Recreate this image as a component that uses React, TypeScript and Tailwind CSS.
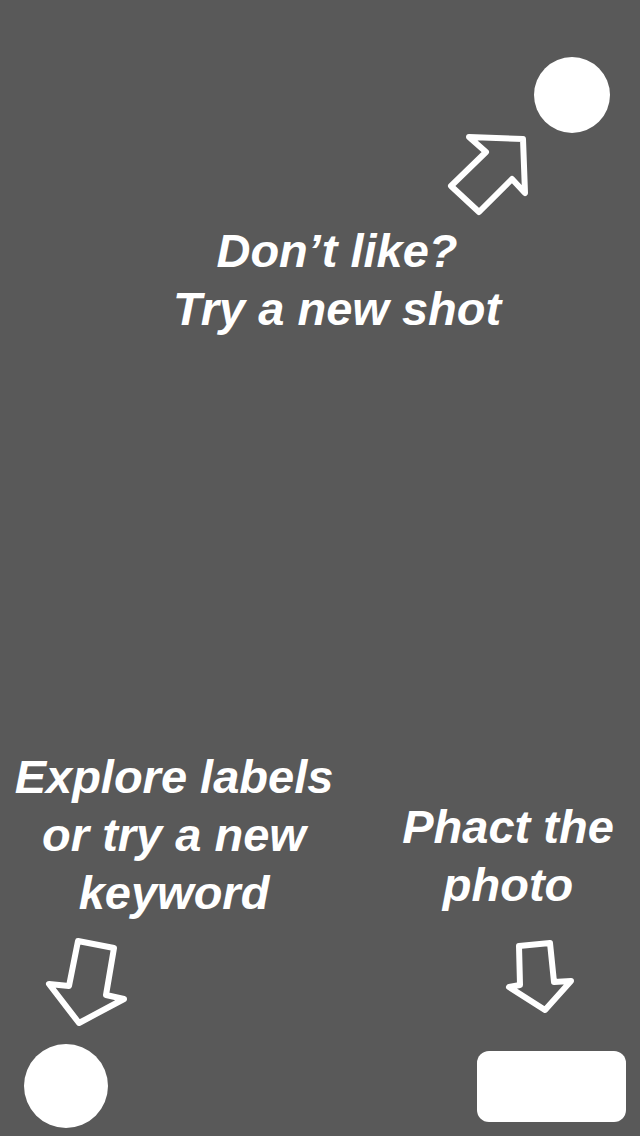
const font = "font-['Liberation_Sans',Arial,sans-serif] font-bold italic text-[47px] leading-[58px] text-white";

function OutlineArrow({ points, w, h, className }: { points: string; w: number; h: number; className?: string }) {
  return (
    <svg width={w} height={h} viewBox={`0 0 ${w} ${h}`} className={className}>
      <polygon points={points} fill="none" stroke="white" strokeWidth="6" strokeLinejoin="round" strokeLinecap="round" />
    </svg>
  );
}

export default function App() {
  return (
    <div className="flex h-[1136px] w-[640px] flex-col overflow-hidden bg-[#595959]">
      {/* top: new shot */}
      <div className="flex justify-end pt-[57px] pr-[30px]">
        <div className="h-[76px] w-[76px] rounded-full bg-white" />
      </div>
      <OutlineArrow
        className="ml-[444px] block"
        w={88}
        h={86}
        points="79,6 25,4 42,19 7,53 35,79 68,46 81,60"
      />
      <div className={`mt-[3px] pl-[34px] text-center ${font}`}>
        Don’t like?
        <br />
        Try a new shot
      </div>

      <div className="flex-1" />

      {/* bottom hints */}
      <div className="flex items-end justify-between">
        <div className="flex w-[348px] flex-col pb-[8px]">
          <div className={`text-center ${font}`}>
            Explore labels
            <br />
            or try a new
            <br />
            keyword
          </div>
          <OutlineArrow
            className="mt-[13px] ml-[42px] block"
            w={88}
            h={94}
            points="36,6 72,13 64,60 82,64 37,88 7,49 27,51"
          />
          <div className="mt-[15px] ml-[24px] h-[84px] w-[84px] rounded-full bg-white" />
        </div>

        <div className="flex w-[264px] flex-col pb-[14px]">
          <div className={`text-center ${font}`}>
            Phact the
            <br />
            photo
          </div>
          <OutlineArrow
            className="mt-[23px] ml-[124px] block"
            w={80}
            h={81}
            points="19,9 50,6 54,45 71,44 45,73 9,50 20,48"
          />
          <div className="mt-[33px] ml-[101px] h-[71px] w-[149px] rounded-[12px] bg-white" />
        </div>
      </div>
    </div>
  );
}
